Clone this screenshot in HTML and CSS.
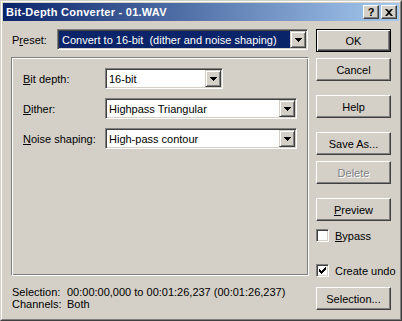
FILE: index.html
```html
<!DOCTYPE html>
<html>
<head>
  <title>Bit-Depth Converter - 01.WAV</title>
  <link rel="stylesheet" href="styles.css">
</head>
<body>
  <div class="window">
    <div class="frame">
      <div class="titlebar">
        <span class="title">Bit-Depth Converter - 01.WAV</span>
        <div class="caption-buttons">
          <span class="caption-btn help">?</span>
          <span class="caption-btn">
            <svg width="8" height="7" viewBox="0 0 8 7"><path d="M0 0h2l2 2 2-2h2L5 3.5 8 7H6L4 5 2 7H0l3-3.5z" fill="#000"/></svg>
          </span>
        </div>
      </div>

      <div class="client">
        <div class="main">
          <div class="preset-row">
            <label class="lbl preset-lbl">P<u>r</u>eset:</label>
            <div class="combo preset">
              <div class="combo-text selected">Convert to 16-bit&nbsp; (dither and noise shaping)</div>
              <div class="combo-btn"><svg width="7" height="4" viewBox="0 0 7 4"><path d="M0 0h7v1h-1v1h-1v1h-1v1h-1v-1h-1v-1h-1v-1h-1z" fill="#000"/></svg></div>
            </div>
          </div>

          <div class="group">
            <div class="field">
              <label class="lbl field-lbl"><u>B</u>it depth:</label>
              <div class="combo short">
                <div class="combo-text">16-bit</div>
                <div class="combo-btn"><svg width="7" height="4" viewBox="0 0 7 4"><path d="M0 0h7v1h-1v1h-1v1h-1v1h-1v-1h-1v-1h-1v-1h-1z" fill="#000"/></svg></div>
              </div>
            </div>
            <div class="field">
              <label class="lbl field-lbl"><u>D</u>ither:</label>
              <div class="combo long">
                <div class="combo-text">Highpass Triangular</div>
                <div class="combo-btn"><svg width="7" height="4" viewBox="0 0 7 4"><path d="M0 0h7v1h-1v1h-1v1h-1v1h-1v-1h-1v-1h-1v-1h-1z" fill="#000"/></svg></div>
              </div>
            </div>
            <div class="field">
              <label class="lbl field-lbl"><u>N</u>oise shaping:</label>
              <div class="combo long">
                <div class="combo-text">High-pass contour</div>
                <div class="combo-btn"><svg width="7" height="4" viewBox="0 0 7 4"><path d="M0 0h7v1h-1v1h-1v1h-1v1h-1v-1h-1v-1h-1v-1h-1z" fill="#000"/></svg></div>
              </div>
            </div>
          </div>

          <div class="info">
            <span>Selection:</span><span>00:00:00,000 to 00:01:26,237 (00:01:26,237)</span>
            <span>Channels:</span><span>Both</span>
          </div>
        </div>

        <div class="side">
          <div class="btn default">OK</div>
          <div class="btn gap-sm">Cancel</div>
          <div class="btn gap-lg">Help</div>
          <div class="btn gap-lg">Save As...</div>
          <div class="btn gap-sm disabled">Delete</div>
          <div class="btn gap-lg"><u>P</u>review</div>
          <div class="check-row bypass">
            <span class="checkbox"></span>
            <span><u>B</u>ypass</span>
          </div>
          <div class="check-row undo">
            <span class="checkbox"><svg width="7" height="7" viewBox="0 0 7 7"><path d="M0 2h1v1h1v1h1V3h1V2h1V1h1V0h1v3h-1v1h-1v1h-1v1h-1v1h-1v-1h-1v-1h-1z" fill="#000"/></svg></span>
            <span>Create undo</span>
          </div>
          <div class="btn gap-sel">Selection...</div>
        </div>
      </div>
    </div>
  </div>
</body>
</html>
```

FILE: styles.css
```css
    body {
      margin: 0;
      font-family: "Liberation Sans", Arial, sans-serif;
      font-size: 11px;
      color: #000;
      background-color: #d4d0c8;
    }

    u {
      text-decoration: underline;
      text-underline-offset: 1px;
    }

    .window {
      width: 402px;
      height: 321px;
      box-sizing: border-box;
      border: 1px solid;
      border-color: #d4d0c8 #404040 #404040 #d4d0c8;
      background-color: #d4d0c8;
    }

    .frame {
      height: 100%;
      box-sizing: border-box;
      border: 1px solid;
      border-color: #fff #808080 #808080 #fff;
      padding: 1px;
      display: flex;
      flex-direction: column;
    }

    /* title bar */
    .titlebar {
      height: 18px;
      flex: none;
      display: flex;
      align-items: center;
      justify-content: space-between;
      padding: 0 2px 0 2px;
      background: linear-gradient(to right, #0a246a, #a6caf0);
    }

    .title {
      color: #fff;
      font-weight: bold;
      padding-left: 1px;
      letter-spacing: 0.25px;
    }

    .caption-buttons {
      display: flex;
      gap: 2px;
    }

    .caption-btn {
      width: 16px;
      height: 14px;
      box-sizing: border-box;
      display: flex;
      align-items: center;
      justify-content: center;
      background-color: #d4d0c8;
      border: 1px solid;
      border-color: #fff #404040 #404040 #fff;
      box-shadow: inset -1px -1px #808080;
    }

    .caption-btn.help {
      font-weight: bold;
      font-size: 11px;
      line-height: 12px;
    }

    /* client area */
    .client {
      display: flex;
      gap: 7px;
      padding: 8px 0 0 8px;
    }

    .main {
      width: 298px;
      display: flex;
      flex-direction: column;
    }

    .preset-row {
      display: flex;
      align-items: center;
    }

    .lbl {
      white-space: nowrap;
    }

    .preset-lbl {
      width: 45px;
      padding-left: 1px;
    }

    .combo {
      height: 21px;
      box-sizing: border-box;
      display: flex;
      padding: 1px;
      border: 1px solid;
      border-color: #808080 #fff #fff #808080;
      box-shadow: inset 1px 1px #404040, inset -1px -1px #d4d0c8;
      background-color: #fff;
    }

    .combo.preset {
      width: 251px;
    }

    .combo.short {
      width: 118px;
    }

    .combo.long {
      width: 192px;
    }

    .combo-text {
      flex: 1;
      display: flex;
      align-items: center;
      padding-left: 2px;
      white-space: nowrap;
      overflow: hidden;
    }

    .combo-text.selected {
      background-color: #0a246a;
      color: #fff;
      padding-left: 3px;
    }

    .combo-btn {
      width: 16px;
      box-sizing: border-box;
      display: flex;
      align-items: center;
      justify-content: center;
      background-color: #d4d0c8;
      border: 1px solid;
      border-color: #d4d0c8 #404040 #404040 #d4d0c8;
      box-shadow: inset 1px 1px #fff, inset -1px -1px #808080;
    }

    /* group panel */
    .group {
      margin-top: 7px;
      height: 219px;
      box-sizing: border-box;
      border: 1px solid;
      border-color: #808080 #fff #fff #808080;
      box-shadow: inset 1px 1px #fff, inset -1px -1px #808080;
      padding: 10px 10px 0 11px;
      display: flex;
      flex-direction: column;
      gap: 9px;
    }

    .field {
      display: flex;
      align-items: center;
    }

    .field-lbl {
      width: 82px;
    }

    /* selection info */
    .info {
      margin-top: 10px;
      padding-left: 1px;
      display: grid;
      grid-template-columns: 55px auto;
      line-height: 12px;
      white-space: nowrap;
    }

    /* right buttons */
    .side {
      width: 75px;
      display: flex;
      flex-direction: column;
    }

    .btn {
      height: 23px;
      box-sizing: border-box;
      display: flex;
      align-items: center;
      justify-content: center;
      border: 1px solid;
      border-color: #fff #404040 #404040 #fff;
      box-shadow: inset -1px -1px #808080;
    }

    .btn.default {
      border-color: #000;
      box-shadow: inset 1px 1px #fff, inset -1px -1px #404040, inset -2px -2px #808080;
    }

    .btn.disabled {
      color: #808080;
      text-shadow: 1px 1px #fff;
    }

    .gap-sm {
      margin-top: 6px;
    }

    .gap-lg {
      margin-top: 14px;
    }

    .gap-sel {
      margin-top: 8px;
    }

    .check-row {
      height: 17px;
      display: flex;
      align-items: center;
      gap: 6px;
      white-space: nowrap;
    }

    .check-row.bypass {
      margin-top: 6px;
    }

    .check-row.undo {
      margin-top: 18px;
    }

    .checkbox {
      width: 13px;
      height: 13px;
      flex: none;
      box-sizing: border-box;
      display: flex;
      align-items: center;
      justify-content: center;
      background-color: #fff;
      border: 1px solid;
      border-color: #808080 #fff #fff #808080;
      box-shadow: inset 1px 1px #404040, inset -1px -1px #d4d0c8;
    }
```
